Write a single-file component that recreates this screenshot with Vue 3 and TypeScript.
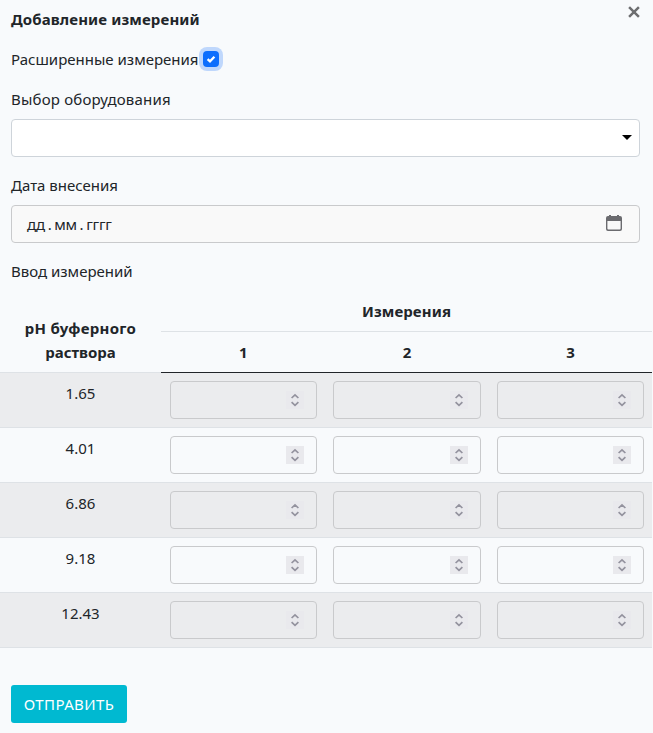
<script setup lang="ts">
import { ref } from 'vue'

const extended = ref<boolean>(true)
const buffers: string[] = ['1.65', '4.01', '6.86', '9.18', '12.43']
const series: number[] = [1, 2, 3]
</script>

<template>
  <main class="panel">
    <header class="head">
      <h1>Добавление измерений</h1>
      <button class="close" type="button" aria-label="Закрыть">
        <svg width="12" height="12" viewBox="0 0 12 12">
          <path d="M1.1 1.1 10.9 10.9M10.9 1.1 1.1 10.9" stroke="#6d6e70" stroke-width="2.5" />
        </svg>
      </button>
    </header>

    <div class="extended">
      <span class="t-ext">Расширенные измерения</span>
      <button class="check" type="button" role="checkbox" :aria-checked="extended" @click="extended = !extended">
        <svg v-if="extended" width="16" height="16" viewBox="0 0 16 16">
          <path d="M4.6 8.1 7 10.4 11.4 5.8" fill="none" stroke="#fff" stroke-width="2.3" />
        </svg>
      </button>
    </div>

    <div class="label wide">Выбор оборудования</div>
    <div class="field select">
      <svg width="10" height="5" viewBox="0 0 10 5"><path d="M0 0H10L5 5Z" fill="#000" /></svg>
    </div>

    <div class="label">Дата внесения</div>
    <div class="field date">
      <span class="date-text"><span>дд</span><span>.</span><span>мм</span><span>.</span><span class="year">гггг</span></span>
      <svg width="16" height="16" viewBox="0 0 16 16">
        <path d="M3 0h2v1h6V0h2v1h1a2 2 0 0 1 2 2v11a2 2 0 0 1-2 2H2a2 2 0 0 1-2-2V3a2 2 0 0 1 2-2h1ZM1.4 6v7.6a1 1 0 0 0 1 1h11.2a1 1 0 0 0 1-1V6Z" fill="#6b6b6f" fill-rule="evenodd" />
      </svg>
    </div>

    <div class="label">Ввод измерений</div>

    <section class="table">
      <div class="thead">
        <div class="th buffer">
          <span class="t-ph">pH буферного</span>
          <span>раствора</span>
        </div>
        <div class="th group">Измерения</div>
        <div v-for="n in series" :key="n" class="th num">{{ n }}</div>
      </div>
      <div v-for="b in buffers" :key="b" class="row">
        <div class="value">{{ b }}</div>
        <div v-for="n in series" :key="n" class="cell">
          <div class="number">
            <span class="spin">
              <svg width="18" height="18" viewBox="0 0 18 18">
                <path d="M5.6 7 9 3.8 12.4 7M5.6 11.2 9 14.4 12.4 11.2" fill="none" stroke="#93929e" stroke-width="1.7" />
              </svg>
            </span>
          </div>
        </div>
      </div>
    </section>

    <button class="submit" type="button">ОТПРАВИТЬ</button>
  </main>
</template>

<style>
body {
  background: #f8fafc;
}
</style>

<style scoped>
.panel {
  box-sizing: border-box;
  width: 652px;
  height: 733px;
  padding-top: 7px;
  background: #f8fafc;
  color: #212529;
  font-family: "Noto Sans", "Open Sans", sans-serif;
  font-size: 15px;
  line-height: 24px;
  white-space: nowrap;
  overflow: hidden;
}
button {
  border: 0;
  padding: 0;
  font: inherit;
}
svg {
  display: block;
}
.head {
  display: flex;
  justify-content: space-between;
  padding: 0 12px 0 11px;
  height: 24px;
}
h1 {
  margin: 0;
  font-size: 15px;
  line-height: 24px;
  font-weight: 700;
  letter-spacing: 0.12px;
}
.close {
  height: 12px;
  margin-top: -1px;
  background: none;
}
.extended {
  display: flex;
  align-items: center;
  margin: 16px 0 16px 11px;
  height: 24px;
}
.t-ext {
  width: 192px;
}
.check {
  width: 16px;
  height: 16px;
  border-radius: 4px;
  background: #0d6efd;
  box-shadow: 0 0 0 4px #bfd7fc;
}
.label {
  height: 24px;
  padding-left: 11px;
}
.wide {
  letter-spacing: 0.19px;
}
.field {
  display: flex;
  align-items: center;
  box-sizing: border-box;
  height: 38px;
  margin: 8px 12px 16px 11px;
  border: 1px solid #ced4da;
  border-radius: 4px;
}
.select {
  justify-content: flex-end;
  padding-right: 7px;
  background: #fff;
}
.select svg {
  margin-top: -2px;
}
.date {
  justify-content: space-between;
  padding: 0 17px 0 15px;
  background: #f9f9f9;
  border-color: #c9cacc;
}
.date svg {
  margin-top: -2px;
}
.date-text {
  display: flex;
  gap: 3px;
  letter-spacing: -0.4px;
}
.year {
  letter-spacing: -0.2px;
}
.table {
  margin-top: 8px;
}
.thead,
.row {
  display: grid;
  grid-template-columns: 161px repeat(3, 1fr);
}
.thead {
  grid-template-rows: 41px 41px;
  font-weight: 700;
  text-align: center;
}
.th {
  box-sizing: border-box;
  padding: 8px 0;
}
.buffer {
  grid-row: 1 / 3;
  display: flex;
  flex-direction: column;
  align-items: center;
  justify-content: flex-end;
  border-bottom: 1px solid #dee2e6;
}
.t-ph {
  letter-spacing: 0.3px;
}
.group {
  grid-column: 2 / 5;
  border-bottom: 1px solid #dee2e6;
  letter-spacing: 0.1px;
}
.num {
  padding-left: 1px;
  border-bottom: 1px solid #212529;
}
.row {
  box-sizing: border-box;
  height: 55px;
  border-bottom: 1px solid #dee2e6;
}
.row:nth-child(even) {
  background: #ebecee;
}
.value {
  padding-top: 8px;
  text-align: center;
}
.cell {
  padding: 8px 8px 0 9px;
}
.cell:nth-child(3) {
  padding-right: 7.4px;
  padding-left: 8.4px;
}
.number {
  display: flex;
  align-items: center;
  justify-content: flex-end;
  box-sizing: border-box;
  height: 38px;
  padding-right: 12px;
  border: 1px solid #c9cacc;
  border-radius: 4px;
}
.spin {
  background: #e9e9ed;
}
.submit {
  display: block;
  width: 116px;
  height: 38px;
  margin: 37px 0 0 11px;
  border-radius: 3px;
  background: #00b9d1;
  color: #fff;
  letter-spacing: 0.4px;
}
</style>
